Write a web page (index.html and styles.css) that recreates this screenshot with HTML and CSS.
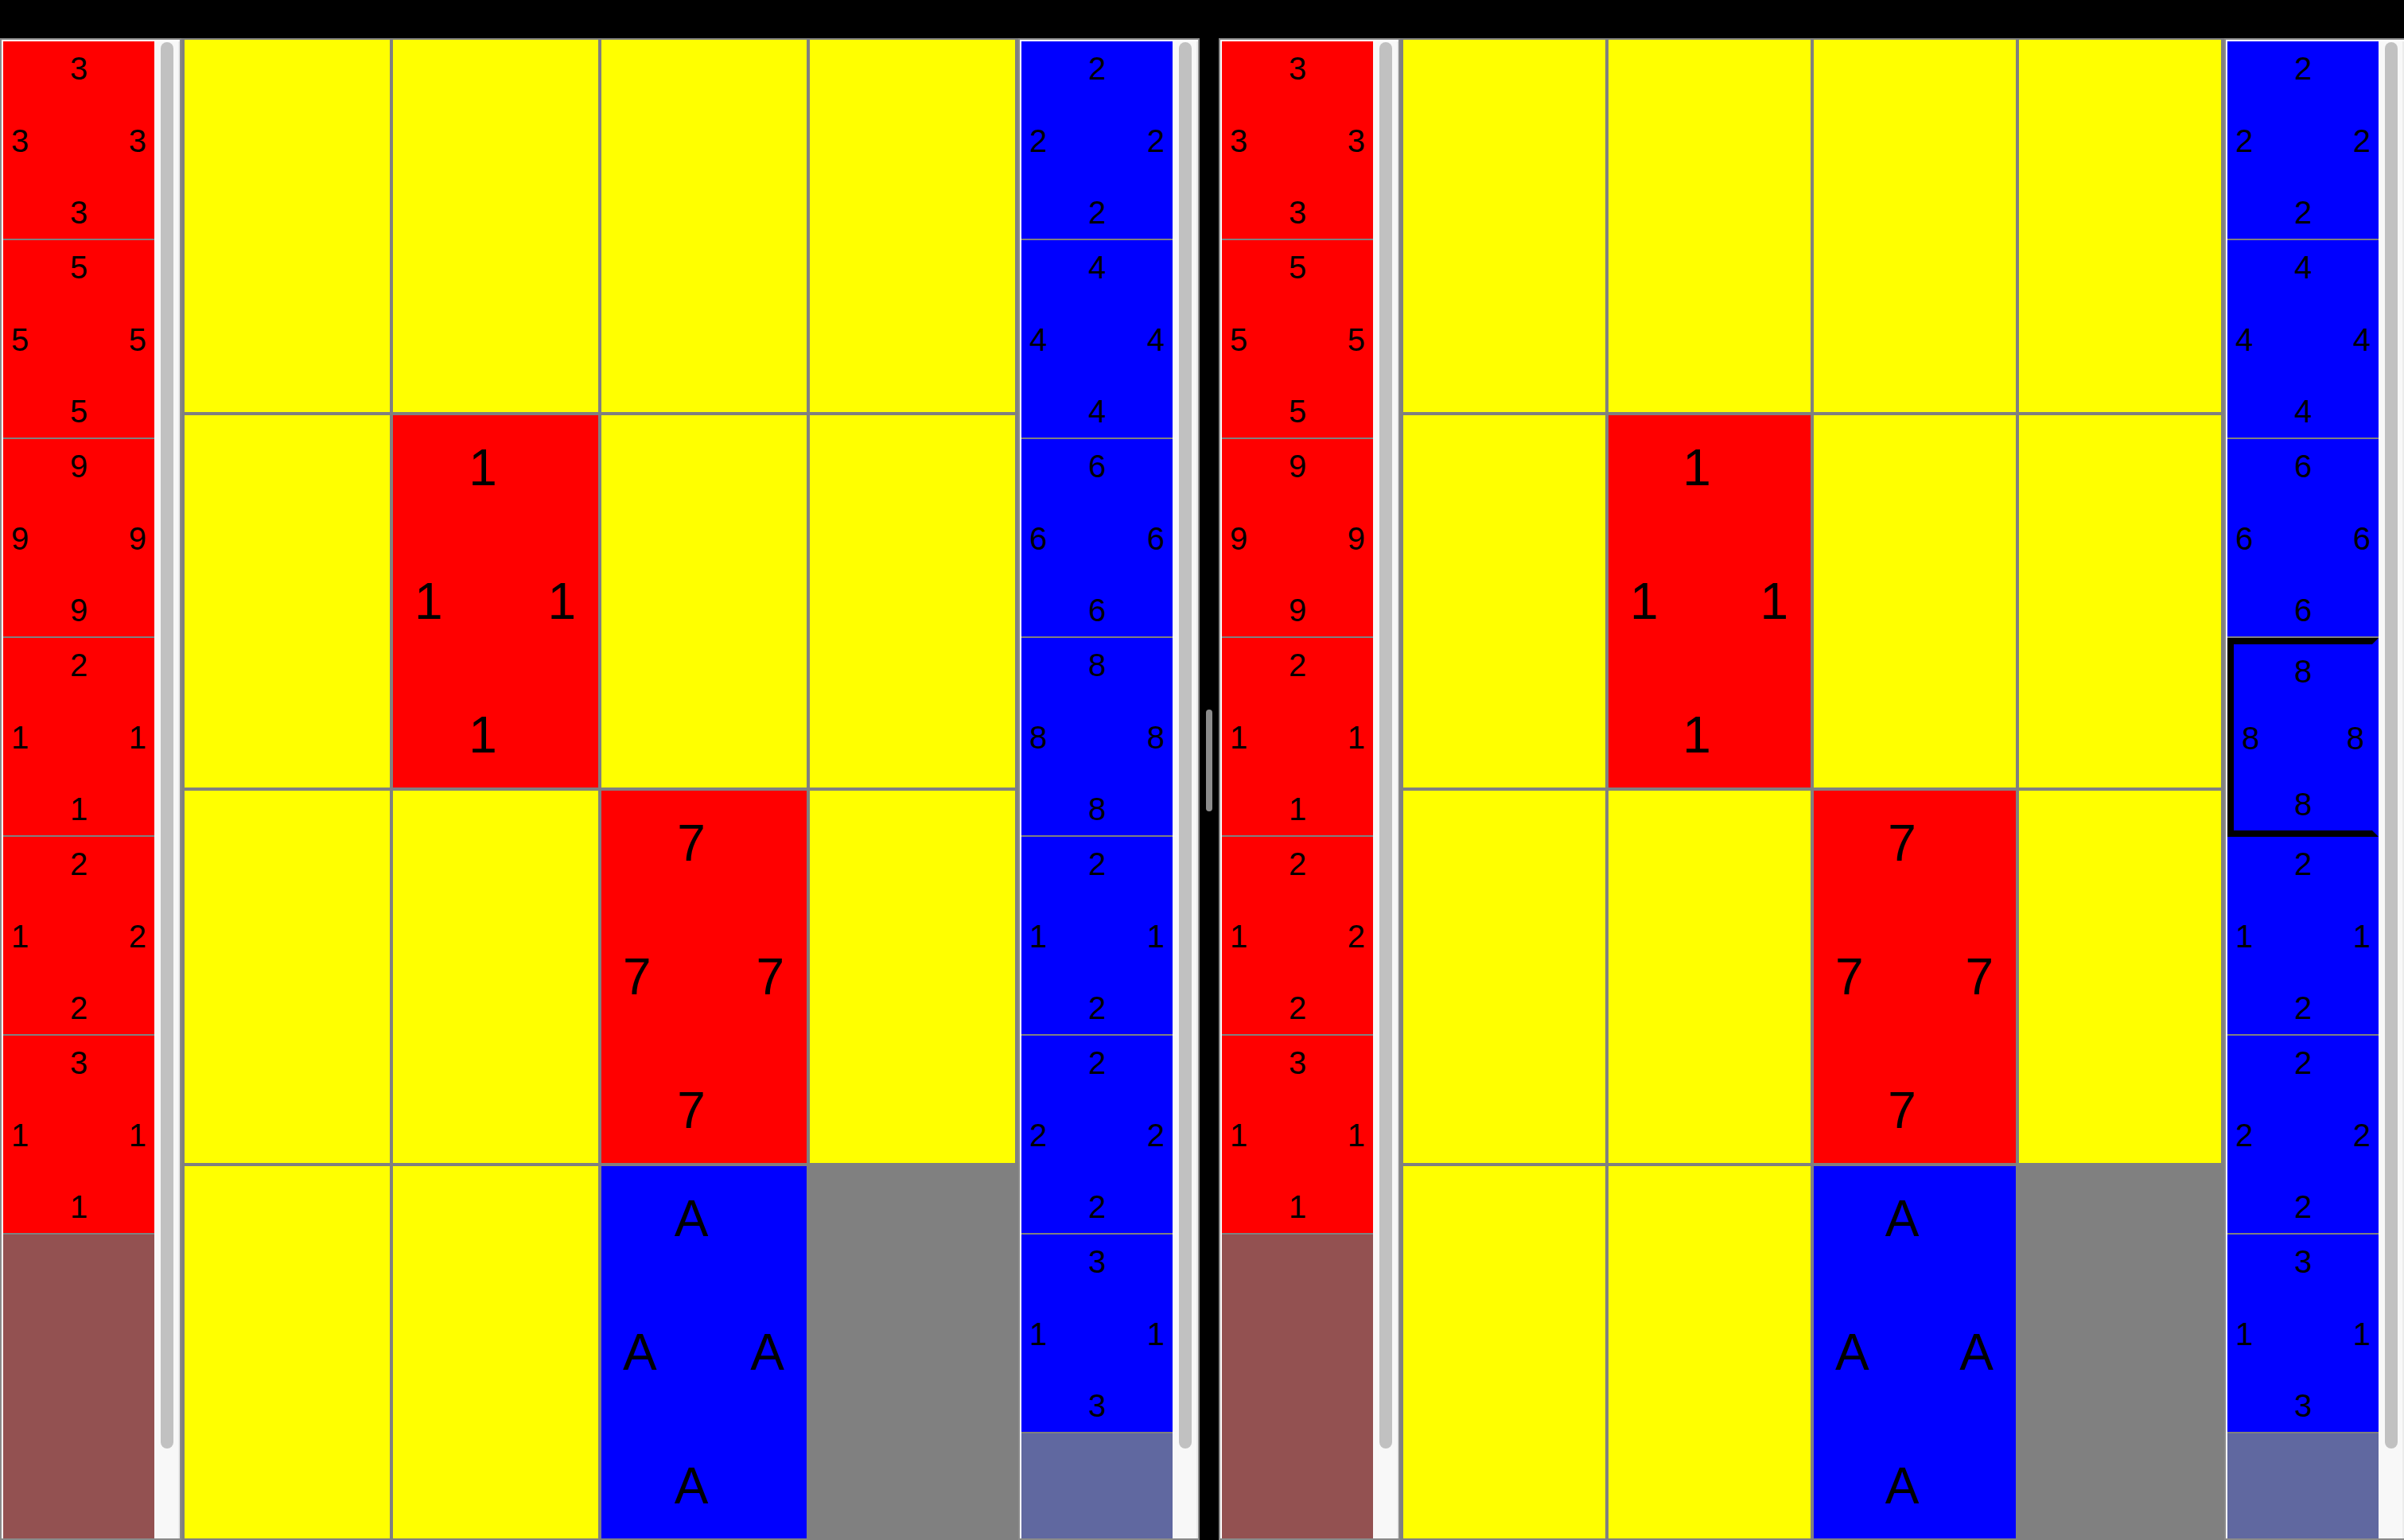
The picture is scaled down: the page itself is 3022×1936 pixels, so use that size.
FILE: index.html
```html
<!DOCTYPE html>
<html lang="en">
<head>
    <meta charset="UTF-8">
    <meta name="viewport" content="width=device-width, initial-scale=1.0">
    <title>Card Board</title>
    <link rel="stylesheet" href="styles.css">
</head>
<body>
    <div class="toolbar"></div>
    <div class="split">
        <div class="pane pane-left">
            <div class="hand hand-red">
                <div class="cards">
                    <div class="card red"><div class="top">3</div><div class="mid"><span>3</span><span>3</span></div><div class="bottom">3</div></div>
                    <div class="card red"><div class="top">5</div><div class="mid"><span>5</span><span>5</span></div><div class="bottom">5</div></div>
                    <div class="card red"><div class="top">9</div><div class="mid"><span>9</span><span>9</span></div><div class="bottom">9</div></div>
                    <div class="card red"><div class="top">2</div><div class="mid"><span>1</span><span>1</span></div><div class="bottom">1</div></div>
                    <div class="card red"><div class="top">2</div><div class="mid"><span>1</span><span>2</span></div><div class="bottom">2</div></div>
                    <div class="card red"><div class="top">3</div><div class="mid"><span>1</span><span>1</span></div><div class="bottom">1</div></div>
                </div>
                <div class="scrollbar"><div class="thumb"></div></div>
            </div>

            <div class="board">
                <div class="cell"></div>
                <div class="cell"></div>
                <div class="cell"></div>
                <div class="cell"></div>

                <div class="cell"></div>
                <div class="cell card red"><div class="top">1</div><div class="mid"><span>1</span><span>1</span></div><div class="bottom">1</div></div>
                <div class="cell"></div>
                <div class="cell"></div>

                <div class="cell"></div>
                <div class="cell"></div>
                <div class="cell card red"><div class="top">7</div><div class="mid"><span>7</span><span>7</span></div><div class="bottom">7</div></div>
                <div class="cell"></div>

                <div class="cell"></div>
                <div class="cell"></div>
                <div class="cell card blue"><div class="top">A</div><div class="mid"><span>A</span><span>A</span></div><div class="bottom">A</div></div>
                <div class="cell blocked"></div>
            </div>

            <div class="hand hand-blue">
                <div class="cards">
                    <div class="card blue"><div class="top">2</div><div class="mid"><span>2</span><span>2</span></div><div class="bottom">2</div></div>
                    <div class="card blue"><div class="top">4</div><div class="mid"><span>4</span><span>4</span></div><div class="bottom">4</div></div>
                    <div class="card blue"><div class="top">6</div><div class="mid"><span>6</span><span>6</span></div><div class="bottom">6</div></div>
                    <div class="card blue"><div class="top">8</div><div class="mid"><span>8</span><span>8</span></div><div class="bottom">8</div></div>
                    <div class="card blue"><div class="top">2</div><div class="mid"><span>1</span><span>1</span></div><div class="bottom">2</div></div>
                    <div class="card blue"><div class="top">2</div><div class="mid"><span>2</span><span>2</span></div><div class="bottom">2</div></div>
                    <div class="card blue"><div class="top">3</div><div class="mid"><span>1</span><span>1</span></div><div class="bottom">3</div></div>
                </div>
                <div class="scrollbar"><div class="thumb"></div></div>
            </div>
        </div>

        <div class="splitter"><div class="grip"></div></div>

        <div class="pane pane-right">
            <div class="hand hand-red">
                <div class="cards">
                    <div class="card red"><div class="top">3</div><div class="mid"><span>3</span><span>3</span></div><div class="bottom">3</div></div>
                    <div class="card red"><div class="top">5</div><div class="mid"><span>5</span><span>5</span></div><div class="bottom">5</div></div>
                    <div class="card red"><div class="top">9</div><div class="mid"><span>9</span><span>9</span></div><div class="bottom">9</div></div>
                    <div class="card red"><div class="top">2</div><div class="mid"><span>1</span><span>1</span></div><div class="bottom">1</div></div>
                    <div class="card red"><div class="top">2</div><div class="mid"><span>1</span><span>2</span></div><div class="bottom">2</div></div>
                    <div class="card red"><div class="top">3</div><div class="mid"><span>1</span><span>1</span></div><div class="bottom">1</div></div>
                </div>
                <div class="scrollbar"><div class="thumb"></div></div>
            </div>

            <div class="board">
                <div class="cell"></div>
                <div class="cell"></div>
                <div class="cell"></div>
                <div class="cell"></div>

                <div class="cell"></div>
                <div class="cell card red"><div class="top">1</div><div class="mid"><span>1</span><span>1</span></div><div class="bottom">1</div></div>
                <div class="cell"></div>
                <div class="cell"></div>

                <div class="cell"></div>
                <div class="cell"></div>
                <div class="cell card red"><div class="top">7</div><div class="mid"><span>7</span><span>7</span></div><div class="bottom">7</div></div>
                <div class="cell"></div>

                <div class="cell"></div>
                <div class="cell"></div>
                <div class="cell card blue"><div class="top">A</div><div class="mid"><span>A</span><span>A</span></div><div class="bottom">A</div></div>
                <div class="cell blocked"></div>
            </div>

            <div class="hand hand-blue">
                <div class="cards">
                    <div class="card blue"><div class="top">2</div><div class="mid"><span>2</span><span>2</span></div><div class="bottom">2</div></div>
                    <div class="card blue"><div class="top">4</div><div class="mid"><span>4</span><span>4</span></div><div class="bottom">4</div></div>
                    <div class="card blue"><div class="top">6</div><div class="mid"><span>6</span><span>6</span></div><div class="bottom">6</div></div>
                    <div class="card blue selected"><div class="top">8</div><div class="mid"><span>8</span><span>8</span></div><div class="bottom">8</div></div>
                    <div class="card blue"><div class="top">2</div><div class="mid"><span>1</span><span>1</span></div><div class="bottom">2</div></div>
                    <div class="card blue"><div class="top">2</div><div class="mid"><span>2</span><span>2</span></div><div class="bottom">2</div></div>
                    <div class="card blue"><div class="top">3</div><div class="mid"><span>1</span><span>1</span></div><div class="bottom">3</div></div>
                </div>
                <div class="scrollbar"><div class="thumb"></div></div>
            </div>
        </div>
    </div>
</body>
</html>
```

FILE: styles.css
```css
body {
    margin: 0;
    background-color: #000000;
    font-family: 'Liberation Sans', Arial, sans-serif;
    color: #000000;
    overflow: hidden;
}

.toolbar {
    height: 48px;
}

.split {
    display: flex;
    height: 1888px;
}

.pane {
    display: flex;
    flex: none;
    height: 100%;
}

.pane-left {
    width: 1508px;
}

.pane-right {
    width: 1492px;
}

.splitter {
    width: 24px;
    flex: none;
    display: flex;
    justify-content: center;
    align-items: center;
}

.grip {
    width: 8px;
    height: 128px;
    margin-bottom: 72px;
    border-radius: 4px;
    background-color: #8c8c8c;
}

/* hands */

.hand {
    display: flex;
    flex: none;
    width: 228px;
    box-sizing: border-box;
    border: 2px solid #8a8a8a;
    padding: 2px 0 0 2px;
    background-color: #ffffff;
}

.cards {
    width: 190px;
    flex: none;
    overflow: hidden;
}

.hand-red .cards {
    background-color: #935151;
}

.hand-blue .cards {
    background-color: #6068a0;
}

.scrollbar {
    width: 32px;
    flex: none;
    box-sizing: border-box;
    padding: 1px 0 0 8px;
    background-color: #f8f8f8;
    border-right: 2px solid #ececec;
}

.thumb {
    width: 16px;
    height: 1768px;
    border-radius: 8px;
    background-color: #c1c1c1;
}

/* cards */

.card {
    display: flex;
    flex-direction: column;
    justify-content: space-between;
    box-sizing: border-box;
    height: 250px;
    padding: 12px 10px 10px;
    border-bottom: 2px solid #808080;
    font-size: 40px;
}

.card .top,
.card .bottom {
    text-align: center;
}

.card .mid {
    display: flex;
    justify-content: space-between;
}

.card.selected {
    border: 8px solid #000000;
    border-right-color: transparent;
    padding: 12px 10px 10px;
}

.red {
    background-color: #ff0000;
}

.blue {
    background-color: #0000ff;
}

/* board */

.board {
    flex: 1;
    display: grid;
    grid-template-columns: repeat(4, 1fr);
    grid-template-rows: repeat(4, 1fr);
    gap: 4px;
    border: 2px solid #808080;
    padding: 0 2px;
    background-color: #808080;
}

.cell {
    background-color: #ffff00;
}

.cell.red {
    background-color: #ff0000;
}

.cell.blue {
    background-color: #0000ff;
}

.cell.blocked {
    background-color: #808080;
}

.cell.card {
    height: auto;
    border: none;
    padding: 29px 28px 29px 27px;
    font-size: 64px;
}

.cell.card .top,
.cell.card .bottom {
    padding-right: 31px;
}
```
